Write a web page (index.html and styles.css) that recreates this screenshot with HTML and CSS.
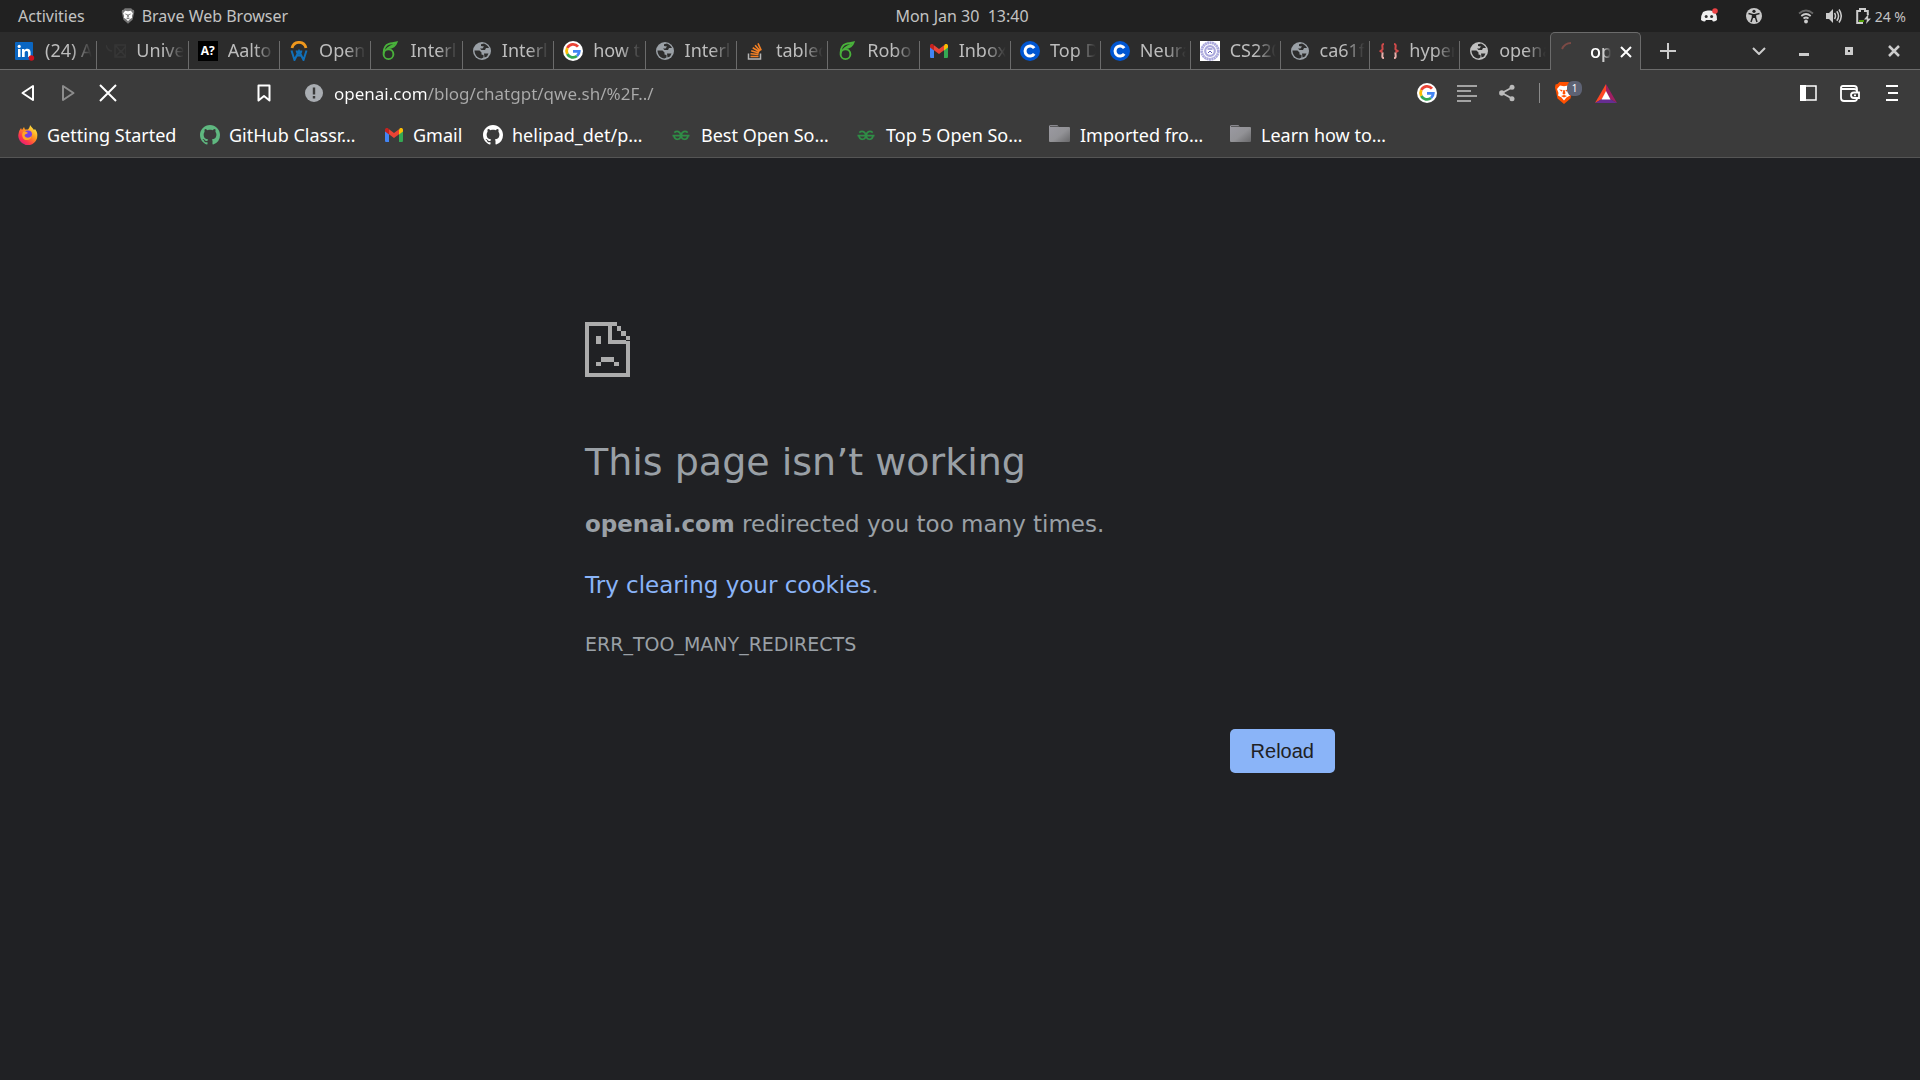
FILE: index.html
```html
<!DOCTYPE html>
<html lang="en">
<head>
<meta charset="utf-8">
<title>openai.com</title>
<link rel="stylesheet" href="styles.css">
</head>
<body>
<svg class="sprite" aria-hidden="true">
  <symbol id="i-linkedin" viewBox="0 0 20 20"><rect x="0" y="1" width="18" height="18" rx="1" fill="#0a66c2"/><g fill="#fff"><circle cx="4.2" cy="5.4" r="1.6"/><path d="M3 8h2.500v8H3zM7 8h2.300v1.200C10.800 7 15.600 7 15.600 11.300V16h-2.500v-4.200c0-2.300-3.400-2.200-3.400 0V16H7z"/></g><circle cx="16.400" cy="17" r="2.800" fill="#d0101c"/></symbol>
  <symbol id="i-univ" viewBox="0 0 20 20"><path d="M0 4c1 4 3 6 6 6M9 4h11v12H9zM10 5l5 6 5-6M10 15l5-5 4 5" fill="none" stroke="#363636" stroke-width="1.600"/></symbol>
  <symbol id="i-ocw" viewBox="0 0 20 20"><path d="M3 7C5-.5 15-.5 17 7" fill="none" stroke="#f0981d" stroke-width="2.800"/><path d="M2.500 9.500L5.500 19 10 10l4.500 9 3-9.500M7.500 9.500l2 6M12.500 9.500l-2 6" fill="none" stroke="#1170b8" stroke-width="2"/></symbol>
  <symbol id="i-leaf" viewBox="0 0 20 20"><g fill="none" stroke="#49b13b" stroke-width="1.900"><circle cx="8.500" cy="13.200" r="4.900"/><path d="M3.700 12.500C3.500 8 5.500 4 9 2.800c2.300-.8 5-.4 7.500-1.300-1 3.300-4 5.300-8.300 5.500C10 5 12 4.300 14 3.800"/></g></symbol>
  <symbol id="i-globe" viewBox="0 0 20 20"><circle cx="10" cy="10" r="9" fill="currentColor"/><path d="M9 3.200l3-.8c2 .6 4 2.200 5 4.600H14l-1 2H9.500L8 7.500h2.500L12 5.500 9 5zM2.500 9.500h5l2 2v2l2 .5v2.500L9.500 17.500C5.500 17.500 2.500 13.500 2.500 9.500zM12 12.500h4.500l-1.500 3-2.500 1z" fill="#2d2d2d"/></symbol>
  <symbol id="i-google" viewBox="0 0 20 20"><circle cx="10" cy="10" r="10" fill="#fff"/><g fill="none" stroke-width="2.800"><path d="M15 5.600A6.400 6.400 0 0 0 4.300 7" stroke="#ea4335"/><path d="M4.300 7a6.600 6.600 0 0 0 0 6" stroke="#fbbc05"/><path d="M4.300 13A6.400 6.400 0 0 0 14 15" stroke="#34a853"/><path d="M14 15a6.300 6.300 0 0 0 2.300-4.700H10" stroke="#4285f4"/></g></symbol>
  <symbol id="i-stack" viewBox="0 0 20 20"><path d="M2.500 12.500V18h12v-5.500" fill="none" stroke="#b5b5b5" stroke-width="1.500"/><path d="M4.500 15.500h8M4.500 12.700l8 .8M5.200 9.800l7.600 2.200M6.700 6.800l6.700 4M9.100 4.200l5 5.800M12 2.300l3.200 7" stroke="#f48024" stroke-width="1.600"/></symbol>
  <symbol id="i-gmail" viewBox="0 0 20 20"><path d="M1 5v10.500A1.300 1.300 0 0 0 2.300 17H5V8z" fill="#4285f4"/><path d="M19 5v10.500a1.300 1.300 0 0 1-1.300 1.500H15V8z" fill="#34a853"/><path d="M15 4.500V9.500L19 6.500V5c0-2-2-2.500-3.300-1.500z" fill="#fbbc04"/><path d="M5 4.500V9.500L1 6.500V5c0-2 2-2.500 3.300-1.500z" fill="#c5221f"/><path d="M5 4.300l5 3.800 5-3.800v5L10 13 5 9.300z" fill="#ea4335"/></symbol>
  <symbol id="i-coursera" viewBox="0 0 20 20"><circle cx="10" cy="10" r="10" fill="#0056d2"/><path d="M14.200 7.200a5 5 0 1 0 0 5.600" fill="none" stroke="#fff" stroke-width="3"/></symbol>
  <symbol id="i-seal" viewBox="0 0 20 20"><path fill="#fff" d="M0 0h20v20H0z"/><g fill="none" stroke="#aaa8dc"><circle cx="10" cy="10" r="8.300" stroke-width="2.800" stroke-dasharray="2 .4"/><circle cx="10" cy="10" r="4.800" stroke-width="2.200"/></g><path d="M7.500 8h5M8 12l2-2 2 2" stroke="#5c5ab5" fill="none"/></symbol>
  <symbol id="i-braces" viewBox="0 0 20 20"><g fill="none" stroke-width="2"><path d="M5 3C2 3 4 7 3.500 8.500L1.500 10l2 1.500M15 3c3 0 1 4 1.500 5.500l2 1.500-2 1.500" stroke="#d04a4a"/><path d="M3.500 11.500C4 13 2 17 5 17M16.500 11.500C16 13 18 17 15 17" stroke="#e8b0ac"/></g></symbol>
  <symbol id="i-spin" viewBox="0 0 20 20"><path d="M1 7C3 3 6 1 10 1" fill="none" stroke="#7c4a45" stroke-width="2"/></symbol>
  <symbol id="i-firefox" viewBox="0 0 20 20"><defs><linearGradient id="fx" x1="1" y1="0" x2=".2" y2="1"><stop offset=".1" stop-color="#fff34a"/><stop offset=".45" stop-color="#ff9a1c"/><stop offset=".75" stop-color="#ff3a4a"/><stop offset="1" stop-color="#e0197e"/></linearGradient></defs><path d="M12 0c1 2 3 3 4 5l1-1c1.500 2 2.500 4 2.300 6.500A9.500 9.500 0 1 1 .7 8C1 6 2 4.500 3 3l1 2 2-3 1 2.500h3C11 3 12 2 12 0z" fill="url(#fx)"/><circle cx="10" cy="9.500" r="4" fill="#7a3fe0"/><path d="M5 7c2-1 4 0 5 1-1 1-3 1-3.500 2.500C8 14 13 13 13.500 10c1 5-7 7.500-9 2C4 10 4 8.500 5 7z" fill="#ffa526"/></symbol>
  <symbol id="i-github" viewBox="0 0 16 16"><path fill="currentColor" d="M8 0C3.580 0 0 3.580 0 8c0 3.540 2.290 6.530 5.470 7.590.4.070.55-.17.55-.38 0-.19-.01-.82-.01-1.490-2.010.37-2.530-.49-2.690-.94-.09-.23-.48-.94-.82-1.130-.28-.15-.68-.52-.01-.53.63-.01 1.080.58 1.230.82.72 1.210 1.870.87 2.330.66.07-.52.28-.87.51-1.070-1.780-.2-3.640-.89-3.640-3.950 0-.87.31-1.590.82-2.150-.08-.2-.36-1.020.08-2.120 0 0 .67-.21 2.200.82.64-.18 1.320-.27 2-.27s1.360.09 2 .27c1.530-1.040 2.200-.82 2.200-.82.44 1.100.16 1.920.08 2.120.51.56.82 1.270.82 2.150 0 3.070-1.870 3.750-3.650 3.950.29.25.54.73.54 1.480 0 1.070-.01 1.930-.01 2.200 0 .21.15.46.55.38A8.010 8.010 0 0 0 16 8c0-4.420-3.580-8-8-8z"/></symbol>
  <symbol id="i-gfg" viewBox="0 0 20 20"><g fill="none" stroke="#2f8d46" stroke-width="1.700"><path d="M2.300 7.600C4.500 5.500 8.500 6 8.700 10.500 8.500 15.500 2.500 15.500 2 10.700"/><path d="M15.700 7.600C13.500 5.500 9.500 6 9.300 10.500 9.500 15.500 15.500 15.500 16 10.700M.5 10.600h17"/></g></symbol>
  <symbol id="i-folder" viewBox="0 0 22 20"><defs><linearGradient id="fo" x1="0" y1="0" x2="1" y2="1"><stop offset="0" stop-color="#9b9aa2"/><stop offset=".55" stop-color="#929296"/><stop offset="1" stop-color="#68686a"/></linearGradient></defs><path d="M0 1.500Q0 0 1.500 0h7L9.500 2H20q1 0 1 1v13q0 1-1 1H1q-1 0-1-1z" fill="url(#fo)"/><path d="M1 1.300h8" stroke="#4b4b4b"/></symbol>
  <symbol id="i-lion" viewBox="0 0 20 22"><path d="M5.500 0h9l2 2 2 .5.500 3-.5 2-2 9L10 22l-6.500-5.500-2-9L1 5.500l.5-3 2-.5z" fill="var(--shield)"/><path d="M6 3.500l4 .8 4-.8L17 7l-1.500 4 .5 2.500-3.500 2L10 18.500l-2.500-3-3.500-2L4.500 11 3 7z" fill="#fff"/><path d="M5 7.500l3.500.6-.5 1.700zM15 7.500l-3.500.6.5 1.700zM9.400 8h1.200l.9 3.500-1.500 1.200-1.500-1.200zM7 14l3-1 3 1-3 1.600z" fill="var(--shield)"/></symbol>
</svg>

<header class="desktop-bar">
  <nav class="desktop-left">
    <button class="plain">Activities</button>
    <button class="plain app-menu"><svg class="app-icon gray-lion"><use href="#i-lion"/></svg>Brave Web Browser</button>
  </nav>
  <time class="clock">Mon Jan 30&nbsp; 13:40</time>
  <div class="tray">
    <svg class="discord" viewBox="0 0 18 16"><path d="M3 4Q6 2 9 2.500 12 2 15 4q2.500 4 2 8-2 1.500-4 1.500l-1-1.500H6l-1 1.500q-2 0-4-1.500-.5-4 2-8z" fill="#eee"/><circle cx="6.200" cy="8.500" r="1.500" fill="#333"/><circle cx="11.600" cy="8.500" r="1.500" fill="#333"/><circle cx="15" cy="3" r="2.800" fill="#ed4245"/></svg>
    <svg class="access" viewBox="0 0 16 16"><circle cx="8" cy="8" r="8" fill="#c8c8c8"/><circle cx="8" cy="3.300" r="1.600" fill="#222"/><path d="M2.500 5.500l4 1v3L5 14M13.500 5.500l-4 1v3L11 14" fill="none" stroke="#222" stroke-width="1.500"/><path d="M6 6h4v4H6z" fill="#222"/></svg>
    <svg class="wifi" viewBox="0 0 16 16"><g fill="none" stroke-width="1.700"><path d="M1 5.500Q8-.5 15 5.500" stroke="#666"/><path d="M3.300 8q4.700-4 9.400 0M5.500 10.500q2.500-2 5 0" stroke="#ccc"/></g><circle cx="8" cy="13.500" r="1.900" fill="#ccc"/></svg>
    <svg class="volume" viewBox="0 0 16 16"><path d="M0 5h3l4-4v14l-4-4H0z" fill="#ccc"/><path d="M8.500 5q2 3 0 6M10.800 3.200q3.500 4.800 0 9.600M13 1.500q4.500 6.500 0 13" fill="none" stroke="#ccc" stroke-width="1.500"/></svg>
    <svg class="battery" viewBox="0 0 15 16"><path d="M7 15H1.200V3H4V1h5v2h2.800v4" fill="none" stroke="#ccc" stroke-width="2"/><path d="M3 12h5v2H3z" fill="#4e9a06"/><path d="M12.500 6L8 11.500h3L10 16l5-5.500h-3z" fill="#ccc"/></svg>
    <span class="percent">24 %</span>
  </div>
</header>

<div class="tab-bar">
  <div class="tabs tabs-older">
    <button class="tab"><svg class="fav"><use href="#i-linkedin"/></svg><span class="tab-title">(24) A</span></button>
    <button class="tab"><svg class="fav"><use href="#i-univ"/></svg><span class="tab-title">Unive</span></button>
    <button class="tab"><span class="fav aalto">A?</span><span class="tab-title">Aalto</span></button>
    <button class="tab"><svg class="fav"><use href="#i-ocw"/></svg><span class="tab-title">Open</span></button>
    <button class="tab"><svg class="fav"><use href="#i-leaf"/></svg><span class="tab-title">Interl</span></button>
    <button class="tab"><svg class="fav"><use href="#i-globe"/></svg><span class="tab-title">Interl</span></button>
    <button class="tab"><svg class="fav"><use href="#i-google"/></svg><span class="tab-title">how t</span></button>
    <button class="tab"><svg class="fav"><use href="#i-globe"/></svg><span class="tab-title">Interl</span></button>
    <button class="tab"><svg class="fav"><use href="#i-stack"/></svg><span class="tab-title">tablec</span></button>
    <button class="tab"><svg class="fav"><use href="#i-leaf"/></svg><span class="tab-title">Robo</span></button>
    <button class="tab"><svg class="fav"><use href="#i-gmail"/></svg><span class="tab-title">Inbox</span></button>
  </div>
  <div class="tabs tabs-newer">
    <button class="tab"><svg class="fav"><use href="#i-coursera"/></svg><span class="tab-title">Top D</span></button>
    <button class="tab"><svg class="fav"><use href="#i-coursera"/></svg><span class="tab-title">Neura</span></button>
    <button class="tab"><svg class="fav"><use href="#i-seal"/></svg><span class="tab-title">CS220</span></button>
    <button class="tab"><svg class="fav"><use href="#i-globe"/></svg><span class="tab-title">ca61f</span></button>
    <button class="tab"><svg class="fav"><use href="#i-braces"/></svg><span class="tab-title">hyper</span></button>
    <button class="tab last"><svg class="fav light"><use href="#i-globe"/></svg><span class="tab-title">opena</span></button>
  </div>
  <div class="tab-active">
    <svg class="fav"><use href="#i-spin"/></svg>
    <span class="tab-title">op</span>
    <button class="tab-close" aria-label="Close tab"><svg viewBox="0 0 12 12"><path d="M1 1l10 10M11 1L1 11" stroke="#fff" stroke-width="2"/></svg></button>
  </div>
  <div class="strip-end">
    <button class="icon-btn new-tab" aria-label="New tab"><svg width="16" height="16"><path d="M8 0v16M0 8h16" stroke="#ccc" stroke-width="2"/></svg></button>
    <div class="window-btns">
      <button class="icon-btn" aria-label="Search tabs"><svg width="14" height="8"><path d="M1 1l6 6 6-6" fill="none" stroke="#ccc" stroke-width="2"/></svg></button>
      <button class="icon-btn" aria-label="Minimize"><svg width="10" height="10"><path d="M0 8.500h10" stroke="#ccc" stroke-width="3"/></svg></button>
      <button class="icon-btn" aria-label="Maximize"><svg width="8" height="8"><path d="M1.500 1.500h5v5h-5z" fill="none" stroke="#ccc" stroke-width="3"/></svg></button>
      <button class="icon-btn" aria-label="Close"><svg width="12" height="12"><path d="M1 1l10 10M11 1L1 11" stroke="#ccc" stroke-width="2.500"/></svg></button>
    </div>
  </div>
</div>

<div class="toolbar">
  <div class="nav-btns">
    <button class="icon-btn" aria-label="Back"><svg width="14" height="18"><path d="M12 2v14L1.500 9z" fill="none" stroke="#fff" stroke-width="2" stroke-linejoin="round"/></svg></button>
    <button class="icon-btn" aria-label="Forward"><svg width="14" height="18"><path d="M2 2v14l10.500-7z" fill="none" stroke="#8c8c8c" stroke-width="2" stroke-linejoin="round"/></svg></button>
    <button class="icon-btn" aria-label="Stop"><svg width="18" height="18"><path d="M1 1l16 16M17 1L1 17" stroke="#fff" stroke-width="2"/></svg></button>
  </div>
  <form class="address">
    <button type="button" class="icon-btn" aria-label="Bookmark this page"><svg width="14" height="18"><path d="M1.500 1.500h11v15L7 12l-5.500 4.500z" fill="none" stroke="#fff" stroke-width="2" stroke-linejoin="round"/></svg></button>
    <button type="button" class="icon-btn info" aria-label="Site information"><svg width="18" height="18"><circle cx="9" cy="9" r="9" fill="#a9adb2"/><path d="M9 3.500v7M9 12v2.500" stroke="#3b3b3b" stroke-width="2.400"/></svg></button>
    <input class="url" type="text" aria-label="Address" value="openai.com/blog/chatgpt/qwe.sh/%2F../">
    <button type="button" class="icon-btn" aria-label="Google"><svg width="20" height="20"><use href="#i-google"/></svg></button>
    <button type="button" class="icon-btn" aria-label="Reader"><svg width="20" height="18"><path d="M0 2h20M0 7h14M0 12h20M0 17h14" stroke="#a3a3a3" stroke-width="2"/></svg></button>
    <button type="button" class="icon-btn" aria-label="Share"><svg width="16" height="18"><path d="M13 3.500L3 9l10 5.500" fill="none" stroke="#bbb" stroke-width="1.800"/><g fill="#bbb"><circle cx="13" cy="3.300" r="2.500"/><circle cx="2.800" cy="9" r="2.700"/><circle cx="13" cy="14.700" r="2.500"/></g></svg></button>
  </form>
  <div class="shields">
    <button class="icon-btn shield" aria-label="Shields"><svg width="20" height="22"><use href="#i-lion"/></svg><span class="badge">1</span></button>
    <button class="icon-btn" aria-label="Rewards"><svg width="22" height="19"><path d="M11 0L0 19l7-4 4-7z" fill="#ff4724"/><path d="M11 0l11 19-7-4-4-7z" fill="#9e1f63"/><path d="M0 19l7-4h8l7 4z" fill="#662d91"/><path d="M11 7l4.500 8.500h-9z" fill="#fff"/></svg></button>
  </div>
  <div class="side-btns">
    <button class="icon-btn" aria-label="Sidebar"><svg width="17" height="16"><rect x="1" y="1" width="15" height="14" fill="none" stroke="#fff" stroke-width="1.500"/><path d="M0 0h6v16H0z" fill="#fff"/></svg></button>
    <button class="icon-btn" aria-label="Wallet"><svg width="20" height="17" fill="none" stroke="#fff" stroke-width="1.800"><path d="M1 2v11q0 3 3 3h10q3 0 3-2.500V12M1 3q0-2 2-2h11q3 0 3 3v3M1 4h13q2.500 0 3 2"/><path d="M19 7.500h-5q-3 0-3 2.800 0 2.700 3 2.700h5zM14 10.300h2"/></svg></button>
    <button class="icon-btn" aria-label="Menu"><svg width="12" height="16"><path d="M0 1h12M2 8h10M0 15h12" stroke="#fff" stroke-width="2"/></svg></button>
  </div>
</div>

<nav class="bookmarks">
  <a href="#"><svg class="fav"><use href="#i-firefox"/></svg>Getting Started</a>
  <a href="#"><svg class="fav green"><use href="#i-github"/></svg>GitHub Classr…</a>
  <a href="#"><svg class="fav"><use href="#i-gmail"/></svg>Gmail</a>
  <a href="#"><svg class="fav white"><use href="#i-github"/></svg>helipad_det/p…</a>
  <a href="#"><svg class="fav"><use href="#i-gfg"/></svg>Best Open So…</a>
  <a href="#"><svg class="fav"><use href="#i-gfg"/></svg>Top 5 Open So…</a>
  <a href="#"><svg class="fav folder"><use href="#i-folder"/></svg>Imported fro…</a>
  <a href="#"><svg class="fav folder"><use href="#i-folder"/></svg>Learn how to…</a>
</nav>

<main class="error-page">
  <svg class="sad-page" viewBox="0 0 45 55"><path fill="#acacac" d="M0 0h32v4H27v14h18v37H0zM4 4v47h37V22H23V4zM32 4h4v5h-4zM36 9h5v5h-5zM41 14h4v5h-4zM11 14h5v8h-5zM16 35h13v5H16zM11 40h5v4h-5zM29 40h5v4h-5z" fill-rule="evenodd"/></svg>
  <h1>This page isn’t working</h1>
  <p><strong>openai.com</strong> redirected you too many times.</p>
  <p><a href="#">Try clearing your cookies</a>.</p>
  <p class="code">ERR_TOO_MANY_REDIRECTS</p>
  <button class="reload">Reload</button>
</main>
</body>
</html>
```
FILE: styles.css
```css
* { box-sizing: border-box; }

body {
  margin: 0;
  min-height: 100vh;
  background: #202124;
  color: #9aa0a6;
  font-family: "Noto Sans", sans-serif;
  font-size: 18px;
}

button, input { font: inherit; color: inherit; }

button {
  padding: 0;
  border: 0;
  background: none;
}

svg { display: block; flex: none; }

.sprite { position: absolute; width: 0; height: 0; }

/* Desktop top bar */
.desktop-bar {
  display: grid;
  grid-template-columns: 1fr auto 1fr;
  align-items: center;
  height: 32px;
  padding: 0 14px 0 18px;
  background: #212121;
  color: #c3c3c3;
  font-size: 16px;
}

.desktop-left { display: flex; gap: 36px; }
.app-menu { display: flex; align-items: center; gap: 7px; }
.app-icon { width: 14px; height: 16px; }
.gray-lion { --shield: #777; }

.tray { display: flex; align-items: center; justify-content: flex-end; }
.discord { width: 18px; height: 16px; margin-right: 28px; }
.access { width: 16px; height: 16px; margin-right: 36px; }
.wifi { width: 16px; height: 16px; margin-right: 12px; }
.volume { width: 16px; height: 16px; margin-right: 14px; }
.battery { width: 15px; height: 16px; margin-right: 4px; }
.percent { font-size: 14px; }

/* Tab strip */
.tab-bar {
  display: flex;
  height: 38px;
  padding-left: 6px;
  background: #2c2c2c;
  box-shadow: inset 0 -1px #6b6b6b;
}

.tabs { display: grid; flex: none; }
.tabs-older { width: 1005px; grid-template-columns: repeat(11, 1fr); }
.tabs-newer { width: 539px; grid-template-columns: repeat(6, 1fr); }

.tab {
  display: flex;
  align-items: center;
  gap: 10px;
  min-width: 0;
  height: 28px;
  margin-top: 9px;
  padding: 0 4px 8px 9px;
  border-right: 1px solid #6b6b6b;
  color: #bdbdbd;
}

.tab.last { border-right: 0; }

.fav {
  flex: none;
  width: 20px;
  height: 20px;
  color: #9aa0a6;
}

.fav.light { color: #c0c0c0; }
.fav.green { color: #5fb880; }
.fav.white { color: #fff; }
.fav.folder { width: 22px; }

.aalto {
  background: #000;
  color: #fff;
  font: bold 12px/20px "Open Sans", sans-serif;
  text-align: center;
}

.tab-title {
  flex: 1;
  min-width: 0;
  padding-bottom: 2px;
  overflow: hidden;
  line-height: 24px;
  text-align: left;
  white-space: nowrap;
  -webkit-mask-image: linear-gradient(to left, transparent, #000 20px);
  mask-image: linear-gradient(to left, transparent, #000 20px);
}

.tab-active {
  display: flex;
  align-items: center;
  flex: none;
  gap: 9px;
  width: 91px;
  padding: 0 8px 0 10px;
  border: 1px solid #6b6b6b;
  border-bottom: 0;
  border-radius: 5px 5px 0 0;
  background: #3b3b3b;
  color: #fff;
  font-weight: 500;
}

.tab-active .tab-title {
  -webkit-mask-image: linear-gradient(to left, transparent, #000 10px);
  mask-image: linear-gradient(to left, transparent, #000 10px);
}

.tab-close svg { width: 12px; height: 12px; }

.strip-end {
  display: flex;
  flex: 1;
  justify-content: space-between;
  padding: 0 4px;
}

.window-btns { display: flex; }

.icon-btn {
  display: flex;
  flex: none;
  align-items: center;
  justify-content: center;
  width: 45px;
}

/* Address row */
.toolbar {
  display: flex;
  align-items: center;
  height: 46px;
  padding: 0 7px 0 8px;
  background: #3b3b3b;
}

.toolbar .icon-btn { width: 40px; height: 40px; }

.nav-btns { display: flex; }

.address {
  display: flex;
  flex: 1;
  align-items: center;
  margin-left: 116px;
}

.address .info { margin-left: 10px; }

.url {
  flex: 1;
  min-width: 0;
  padding: 0;
  border: 0;
  outline: 0;
  color: transparent;
  background: linear-gradient(to right, #fff 93px, #ababab 93px);
  -webkit-background-clip: text;
  background-clip: text;
  font-size: 17px;
}

.shields {
  display: flex;
  gap: 2px;
  width: 248px;
  margin-left: 12px;
  padding-left: 5px;
  background: linear-gradient(#8a8a8a, #8a8a8a) left center / 1px 20px no-repeat;
}

.shield { position: relative; --shield: #ff5000; }

.badge {
  position: absolute;
  top: 8px;
  right: 2px;
  width: 15px;
  height: 15px;
  border-radius: 6px;
  background: #5d6274;
  color: #fff;
  font-size: 10px;
  line-height: 15px;
}

.side-btns { display: flex; }
.side-btns .icon-btn { width: 42px; }

/* Bookmarks */
.bookmarks {
  display: grid;
  grid-template-columns: 182px 184px 99px 189px 185px 192px 181px auto;
  height: 42px;
  padding-left: 18px;
  border-bottom: 1px solid #555;
  background: #3b3b3b;
}

.bookmarks a {
  display: flex;
  align-items: center;
  gap: 9px;
  height: 38px;
  color: #fff;
  text-decoration: none;
  white-space: nowrap;
}

/* Error page */
.error-page {
  max-width: 750px;
  margin: 0 auto;
  padding-top: 164px;
  font-family: "DejaVu Sans", sans-serif;
  font-size: 23px;
  line-height: 36px;
}

.sad-page { width: 45px; height: 55px; }

h1 {
  margin: 61px 0 20px;
  font-size: 38px;
  font-weight: 400;
  line-height: 48px;
}

p { margin: 0 0 25px; }
p a { color: #8ab4f8; text-decoration: none; }
.code { margin-bottom: 69px; font-size: 19px; line-height: 32px; }

.reload {
  display: block;
  margin-left: auto;
  padding: 0 21px;
  border-radius: 5px;
  background: #8ab4f8;
  color: #202124;
  font: 20px/44px "Liberation Sans", sans-serif;
}
```
